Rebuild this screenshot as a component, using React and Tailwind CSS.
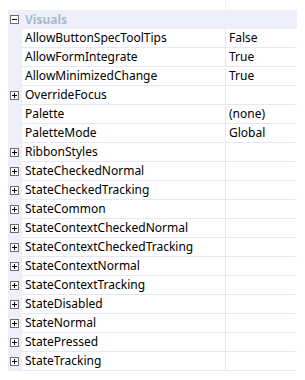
import React from "react";

const rows = [
  { name: "AllowButtonSpecToolTips", value: "False" },
  { name: "AllowFormIntegrate", value: "True" },
  { name: "AllowMinimizedChange", value: "True" },
  { name: "OverrideFocus", expand: true },
  { name: "Palette", value: "(none)" },
  { name: "PaletteMode", value: "Global" },
  { name: "RibbonStyles", expand: true },
  { name: "StateCheckedNormal", expand: true },
  { name: "StateCheckedTracking", expand: true },
  { name: "StateCommon", expand: true },
  { name: "StateContextCheckedNormal", expand: true },
  { name: "StateContextCheckedTracking", expand: true },
  { name: "StateContextNormal", expand: true },
  { name: "StateContextTracking", expand: true },
  { name: "StateDisabled", expand: true },
  { name: "StateNormal", expand: true },
  { name: "StatePressed", expand: true },
  { name: "StateTracking", expand: true },
];

function Box({ plus }) {
  return (
    <svg width="9" height="9" viewBox="0 0 9 9" shapeRendering="crispEdges" className="shrink-0">
      <rect x="0.5" y="0.5" width="8" height="8" fill="#fff" stroke="#6e6e6e" />
      <line x1="2" y1="4.5" x2="7" y2="4.5" stroke="#000" />
      {plus && <line x1="4.5" y1="2" x2="4.5" y2="7" stroke="#000" />}
    </svg>
  );
}

export default function App() {
  return (
    <div
      className="w-[305px] h-[380px] bg-white pl-[8px] text-[12px] text-black"
      style={{ fontFamily: '"Noto Sans", "DejaVu Sans", sans-serif' }}
    >
      <div className="flex h-[10px] w-[289px]">
        <div className="w-[217px]" />
        <div className="flex-1 border-l border-[#f0f0f8]" />
      </div>
      <div className="w-[289px]">
        <div className="flex h-[19px] items-center bg-[#efeff9]">
          <div className="w-[14px] shrink-0 flex items-center pl-[2px]">
            <Box />
          </div>
          <span className="pl-[3px] font-bold text-[#a6bccb] leading-none">Visuals</span>
        </div>
        {rows.map((r) => (
          <div key={r.name} className="flex h-[19px]">
            <div className="w-[14px] shrink-0 bg-[#efeff9] flex items-center pl-[2px]">
              {r.expand && <Box plus />}
            </div>
            <div className="w-[203px] shrink-0 border-b border-[#e6e6f6] pl-[3px] flex items-center whitespace-nowrap overflow-hidden leading-none">
              {r.name}
            </div>
            <div className="flex-1 border-l border-b border-[#e6e6f6] pl-[3px] flex items-center leading-none">
              {r.value || ""}
            </div>
          </div>
        ))}
      </div>
    </div>
  );
}
